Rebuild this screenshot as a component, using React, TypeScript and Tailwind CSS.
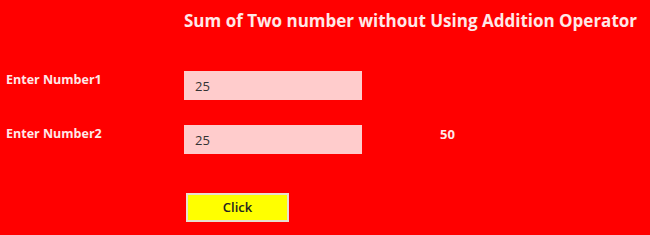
import { useState } from 'react'

const font = { fontFamily: '"Open Sans", "Noto Sans", sans-serif' }

export default function App() {
  const [a, setA] = useState('25')
  const [b, setB] = useState('25')
  const [sum, setSum] = useState('50')

  function addWithoutPlus(x: number, y: number) {
    while (y !== 0) {
      const carry = x & y
      x = x ^ y
      y = carry << 1
    }
    return x
  }

  return (
    <div
      className="w-full h-[235px] bg-[#ff0000] text-[#ffe8e8] overflow-hidden"
      style={font}
    >
      <div className="pl-[184px] pt-[9px] h-[71px]">
        <h1 className="text-[17px] font-bold leading-[24px]">
          Sum of Two number without Using Addition Operator
        </h1>
      </div>

      <div className="flex items-start h-[54px]">
        <label className="w-[184px] pl-[6px] pt-[1px] text-[12.5px] font-bold leading-[16px]">
          Enter Number1
        </label>
        <input
          value={a}
          onChange={(e) => setA(e.target.value)}
          className="w-[178px] h-[29px] bg-[#ffcccc] text-[#333] text-[13px] pl-[11px] outline-none"
        />
      </div>

      <div className="flex items-start h-[68px]">
        <label className="w-[184px] pl-[6px] pt-[1px] text-[12.5px] font-bold leading-[16px]">
          Enter Number2
        </label>
        <input
          value={b}
          onChange={(e) => setB(e.target.value)}
          className="w-[178px] h-[29px] bg-[#ffcccc] text-[#333] text-[13px] pl-[11px] outline-none"
        />
        <span className="ml-[78px] pt-[1px] text-[13px] font-bold leading-[16px]">{sum}</span>
      </div>

      <div className="pl-[186px]">
        <button
          onClick={() => setSum(String(addWithoutPlus(Number(a), Number(b))))}
          className="w-[103px] h-[29px] bg-[#ffff00] border-2 border-[#e8e0d0] text-[#222] text-[13px] font-semibold"
        >
          Click
        </button>
      </div>
    </div>
  )
}
